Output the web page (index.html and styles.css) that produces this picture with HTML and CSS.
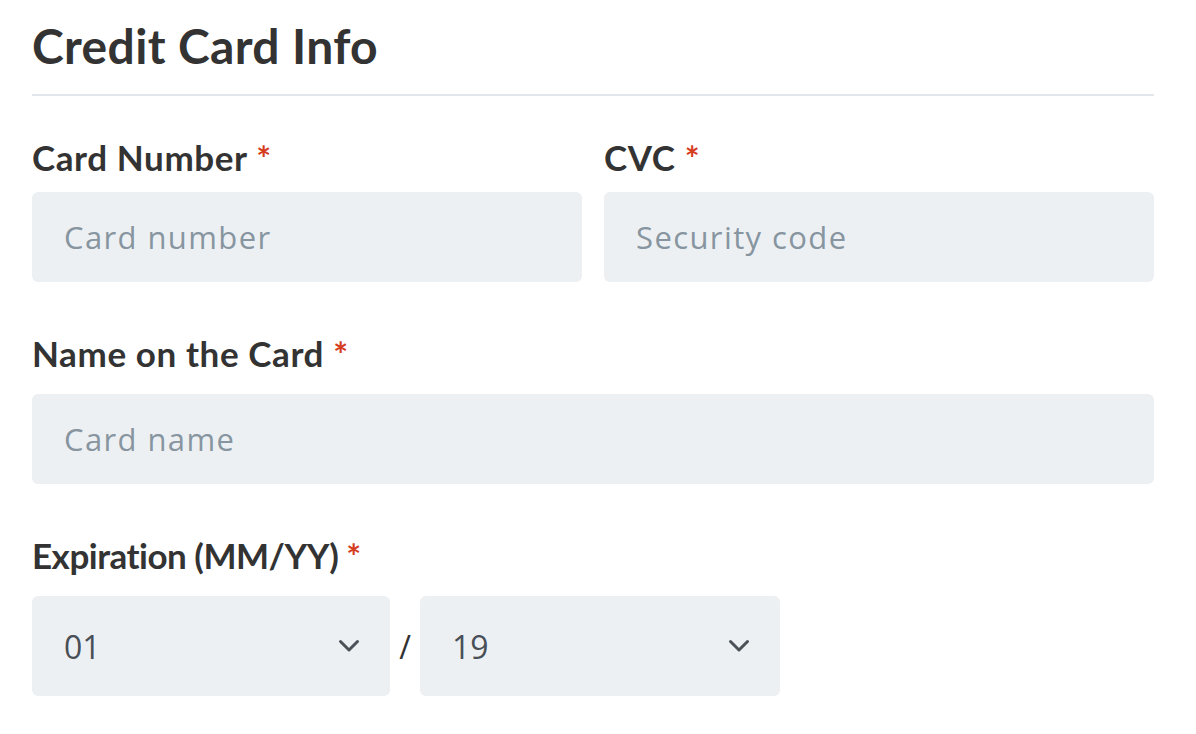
FILE: index.html
```html
<!DOCTYPE html>
<html lang="en">
<head>
<meta charset="utf-8">
<title>Credit Card Info</title>
<link rel="stylesheet" href="styles.css">
</head>
<body>
<div class="form">
  <h1 class="title">Credit Card Info</h1>
  <div class="divider"></div>
  <div class="row two first">
    <div class="field">
      <label class="label">Card Number <span class="req">*</span></label>
      <div class="input placeholder">Card number</div>
    </div>
    <div class="field">
      <label class="label">CVC <span class="req">*</span></label>
      <div class="input placeholder">Security code</div>
    </div>
  </div>
  <div class="row">
    <div class="field">
      <label class="label">Name on the Card <span class="req">*</span></label>
      <div class="input placeholder">Card name</div>
    </div>
  </div>
  <div class="row">
    <div class="field">
      <label class="label label-tight">Expiration (MM/YY) <span class="req">*</span></label>
      <div class="expiry">
        <div class="select"><span>01</span>
          <svg class="chev" width="22" height="14" viewBox="0 0 22 14"><path d="M2.5 2.5 L11 11 L19.5 2.5" fill="none" stroke="#4b5158" stroke-width="3" stroke-linecap="round" stroke-linejoin="round"/></svg>
        </div>
        <span class="slash">/</span>
        <div class="select"><span>19</span>
          <svg class="chev" width="22" height="14" viewBox="0 0 22 14"><path d="M2.5 2.5 L11 11 L19.5 2.5" fill="none" stroke="#4b5158" stroke-width="3" stroke-linecap="round" stroke-linejoin="round"/></svg>
        </div>
      </div>
    </div>
  </div>
</div>
</body>
</html>
```
FILE: styles.css
```css
html, body {
  margin: 0;
  background: #ffffff;
}
body {
  font-family: "Lato", "Open Sans", sans-serif;
  color: #333333;
}
.form {
  width: 1122px;
  padding: 18px 0 0 32px;
}
.title {
  margin: 0;
  font-size: 48px;
  line-height: 56px;
  font-weight: 700;
  letter-spacing: 0.35px;
  color: #333333;
}
.divider {
  height: 2px;
  background: #e3e7eb;
  margin-top: 20px;
}
.row {
  margin-top: 50px;
}
.first {
  margin-top: 40px;
}
.two {
  display: grid;
  grid-template-columns: 1fr 1fr;
  column-gap: 22px;
}
.field {
  display: flex;
  flex-direction: column;
}
.label {
  font-size: 35px;
  line-height: 42px;
  font-weight: 700;
  letter-spacing: 0.6px;
  color: #333333;
  margin-bottom: 20px;
}
.label-tight {
  letter-spacing: -0.5px;
}
.first .label {
  margin-bottom: 14px;
}
.req {
  color: #d63c1e;
}
.input {
  height: 90px;
  background: #edf0f3;
  border-radius: 6px;
  box-sizing: border-box;
  padding: 0 32px;
  display: flex;
  align-items: center;
  font-family: "Open Sans", "Lato", sans-serif;
  font-size: 31px;
  letter-spacing: 1.4px;
}
.placeholder {
  color: #8795a0;
}
.expiry {
  display: flex;
  align-items: center;
}
.select {
  width: 358px;
  height: 100px;
  background: #edf0f3;
  border-radius: 6px;
  box-sizing: border-box;
  padding: 0 30px 0 32px;
  display: flex;
  align-items: center;
  justify-content: space-between;
  font-family: "Open Sans", "Lato", sans-serif;
  font-size: 32px;
  color: #494f56;
}
.select:last-child {
  width: 360px;
}
.slash {
  width: 30px;
  text-align: center;
  font-family: "Open Sans", "Lato", sans-serif;
  font-size: 32px;
  color: #333333;
}
.chev {
  display: block;
}
```
